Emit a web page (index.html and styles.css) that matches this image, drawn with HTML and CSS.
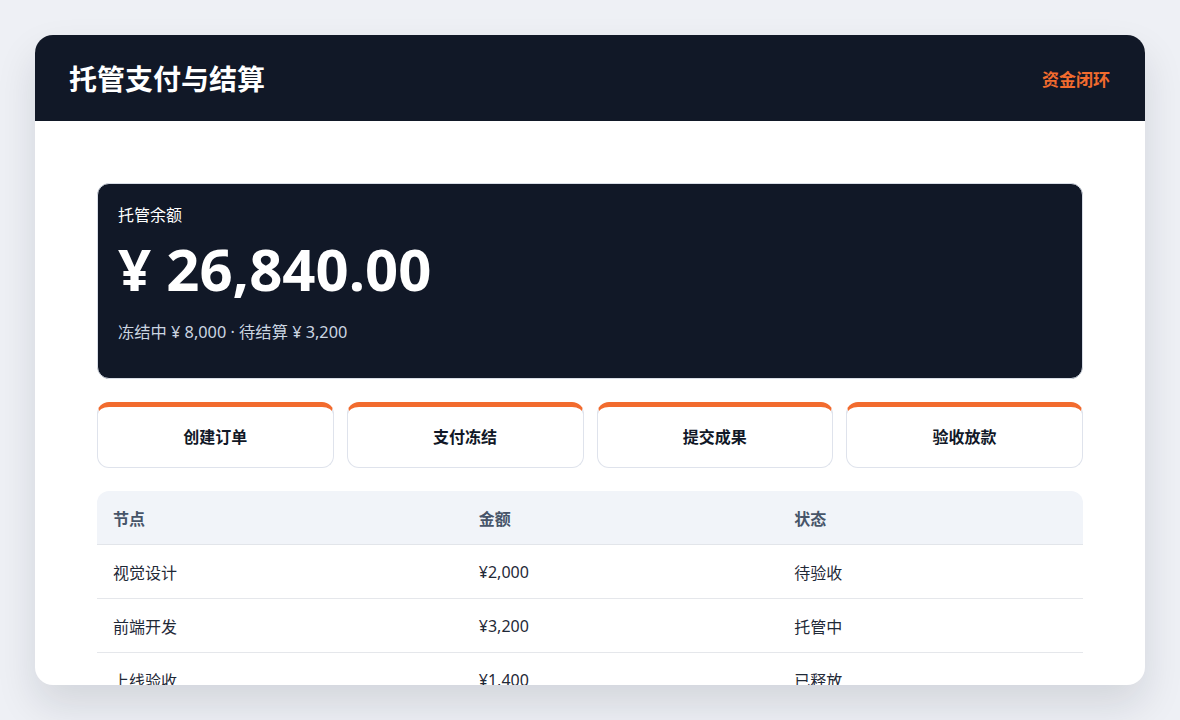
FILE: index.html
```html
<!DOCTYPE html>
<html lang="zh">
<head>
<meta charset="utf-8">
<link rel="stylesheet" href="styles.css">
</head>
<body>
<div class="card">
  <header class="top">
    <h1 class="title">托管支付与结算</h1>
    <span class="tag">资金闭环</span>
  </header>
  <main class="content">
    <section class="balance">
      <div class="label">托管余额</div>
      <div class="amount">¥ 26,840.00</div>
      <div class="sub">冻结中 ¥ 8,000 · 待结算 ¥ 3,200</div>
    </section>
    <section class="steps">
      <div class="step">创建订单</div>
      <div class="step">支付冻结</div>
      <div class="step">提交成果</div>
      <div class="step">验收放款</div>
    </section>
    <table class="nodes">
      <thead>
        <tr><th class="c1">节点</th><th class="c2">金额</th><th>状态</th></tr>
      </thead>
      <tbody>
        <tr><td>视觉设计</td><td>¥2,000</td><td>待验收</td></tr>
        <tr><td>前端开发</td><td>¥3,200</td><td>托管中</td></tr>
        <tr><td>上线验收</td><td>¥1,400</td><td>已释放</td></tr>
      </tbody>
    </table>
  </main>
</div>
</body>
</html>
```
FILE: styles.css
```css
* { box-sizing: border-box; }
html, body { margin: 0; padding: 0; }
body {
  background: #eef0f5;
  font-family: "Noto Sans", "Noto Sans CJK SC", sans-serif;
  padding: 35px;
  height: 720px;
  overflow: hidden;
}
.card {
  background: #ffffff;
  border-radius: 18px;
  height: 650px;
  overflow: hidden;
  box-shadow: 0 20px 40px rgba(17, 24, 39, 0.12);
}
.top {
  background: #111827;
  height: 86px;
  display: flex;
  align-items: center;
  justify-content: space-between;
  padding: 0 35px 0 34px;
}
.title {
  margin: 0;
  color: #ffffff;
  font-size: 28px;
  font-weight: 700;
}
.tag {
  color: #f26b2e;
  font-size: 17px;
  font-weight: 700;
}
.content {
  padding: 62px 62px 0;
  display: flex;
  flex-direction: column;
  gap: 23px;
}
.balance {
  background: #111827;
  border: 1px solid #d8dde6;
  border-radius: 12px;
  height: 196px;
  padding: 20px 20px;
  color: #ffffff;
}
.label { font-size: 16px; line-height: 22px; }
.amount {
  font-size: 58px;
  font-weight: 700;
  line-height: 72px;
  margin-top: 7px;
}
.sub {
  margin-top: 15px;
  font-size: 16.3px;
  color: #cbd5e1;
  line-height: 24px;
}
.steps {
  display: grid;
  grid-template-columns: repeat(4, 1fr);
  gap: 13px;
}
.step {
  height: 66px;
  border: 1px solid #dfe3ec;
  border-top: 5px solid #f26b2e;
  border-radius: 12px;
  display: flex;
  align-items: center;
  justify-content: center;
  font-size: 16px;
  font-weight: 700;
  color: #111827;
  padding-bottom: 2px;
}
.nodes {
  width: 100%;
  border-collapse: separate;
  border-spacing: 0;
  font-size: 16px;
}
.nodes th {
  background: #f1f4f9;
  color: #475569;
  font-weight: 700;
  text-align: left;
  height: 54px;
  padding: 0 16px;
  border-bottom: 1px solid #e2e5ea;
}
.nodes th:first-child { border-top-left-radius: 12px; }
.nodes th:last-child { border-top-right-radius: 12px; }
.nodes .c1 { width: 37.1%; }
.nodes .c2 { width: 32%; }
.nodes td {
  height: 54px;
  padding: 0 16px;
  color: #1f2937;
  border-bottom: 1px solid #e5e7eb;
}
```
